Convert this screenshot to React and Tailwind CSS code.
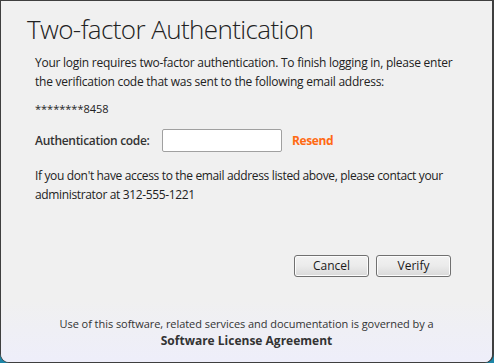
import React, { useState } from 'react';

const font = { fontFamily: '"Segoe UI", "Open Sans", "Noto Sans", sans-serif' };

const WinButton = ({ children }) => (
  <button className="w-[75px] h-[22px] rounded-[3px] border border-[#707070] bg-gradient-to-b from-[#f2f2f2] via-[#ebebeb] to-[#d9d9d9] text-[12px] text-[#1a1a1a] leading-none shadow-[inset_0_0_0_1px_#fcfcfc]">
    {children}
  </button>
);

const App = () => {
  const [code, setCode] = useState('');

  return (
    <div className="w-[494px] h-[363px] bg-[#1d86a8] overflow-hidden" style={font}>
      <div className="flex flex-col h-full border-l border-t border-r-2 border-b border-[#3f3f3f] rounded-b-[9px] overflow-hidden bg-[#f0f0f0]">
        <div className="flex-1 flex flex-col">
          <h1 className="pl-[26px] pt-[8px] text-[26px] font-light text-[#222] leading-[40px] tracking-[-0.6px]">
            Two-factor Authentication
          </h1>

          <div className="pl-[34px] pr-[30px] text-[12px] text-[#222] leading-[19px]">
            <p className="mt-[4px] tracking-[-0.25px]">
              Your login requires two-factor authentication. To finish logging in, please enter the verification code that was sent to the following email address:
            </p>
            <p className="mt-[8px] text-[11px]">********8458</p>

            <div className="flex items-center mt-[11px]">
              <label className="w-[127px] font-semibold text-[#333] tracking-[-0.3px]">Authentication code:</label>
              <input
                value={code}
                onChange={(e) => setCode(e.target.value)}
                className="w-[120px] h-[23px] bg-white border border-[#a0a0a0] rounded-[2px] px-1 text-[12px] outline-none"
              />
              <a className="ml-[10px] font-bold text-[#ff6a13] cursor-pointer tracking-[-0.4px]">Resend</a>
            </div>

            <p className="mt-[14px] pr-[6px] tracking-[-0.35px]">
              If you don't have access to the email address listed above, please contact your administrator at 312-555-1221
            </p>
          </div>

          <div className="flex justify-end gap-[7px] pr-[41px] mt-auto mb-[23px]">
            <WinButton>Cancel</WinButton>
            <WinButton>Verify</WinButton>
          </div>
        </div>

        <div className="h-[62px] flex flex-col items-center pt-[15px] bg-gradient-to-b from-[#f0f0f0] to-[#eeeefa] text-[11px] text-[#333] leading-[17px]">
          <p className="tracking-[-0.05px]">Use of this software, related services and documentation is governed by a</p>
          <p className="text-[12px] font-bold">Software License Agreement</p>
        </div>
      </div>
    </div>
  );
};

export default App;
